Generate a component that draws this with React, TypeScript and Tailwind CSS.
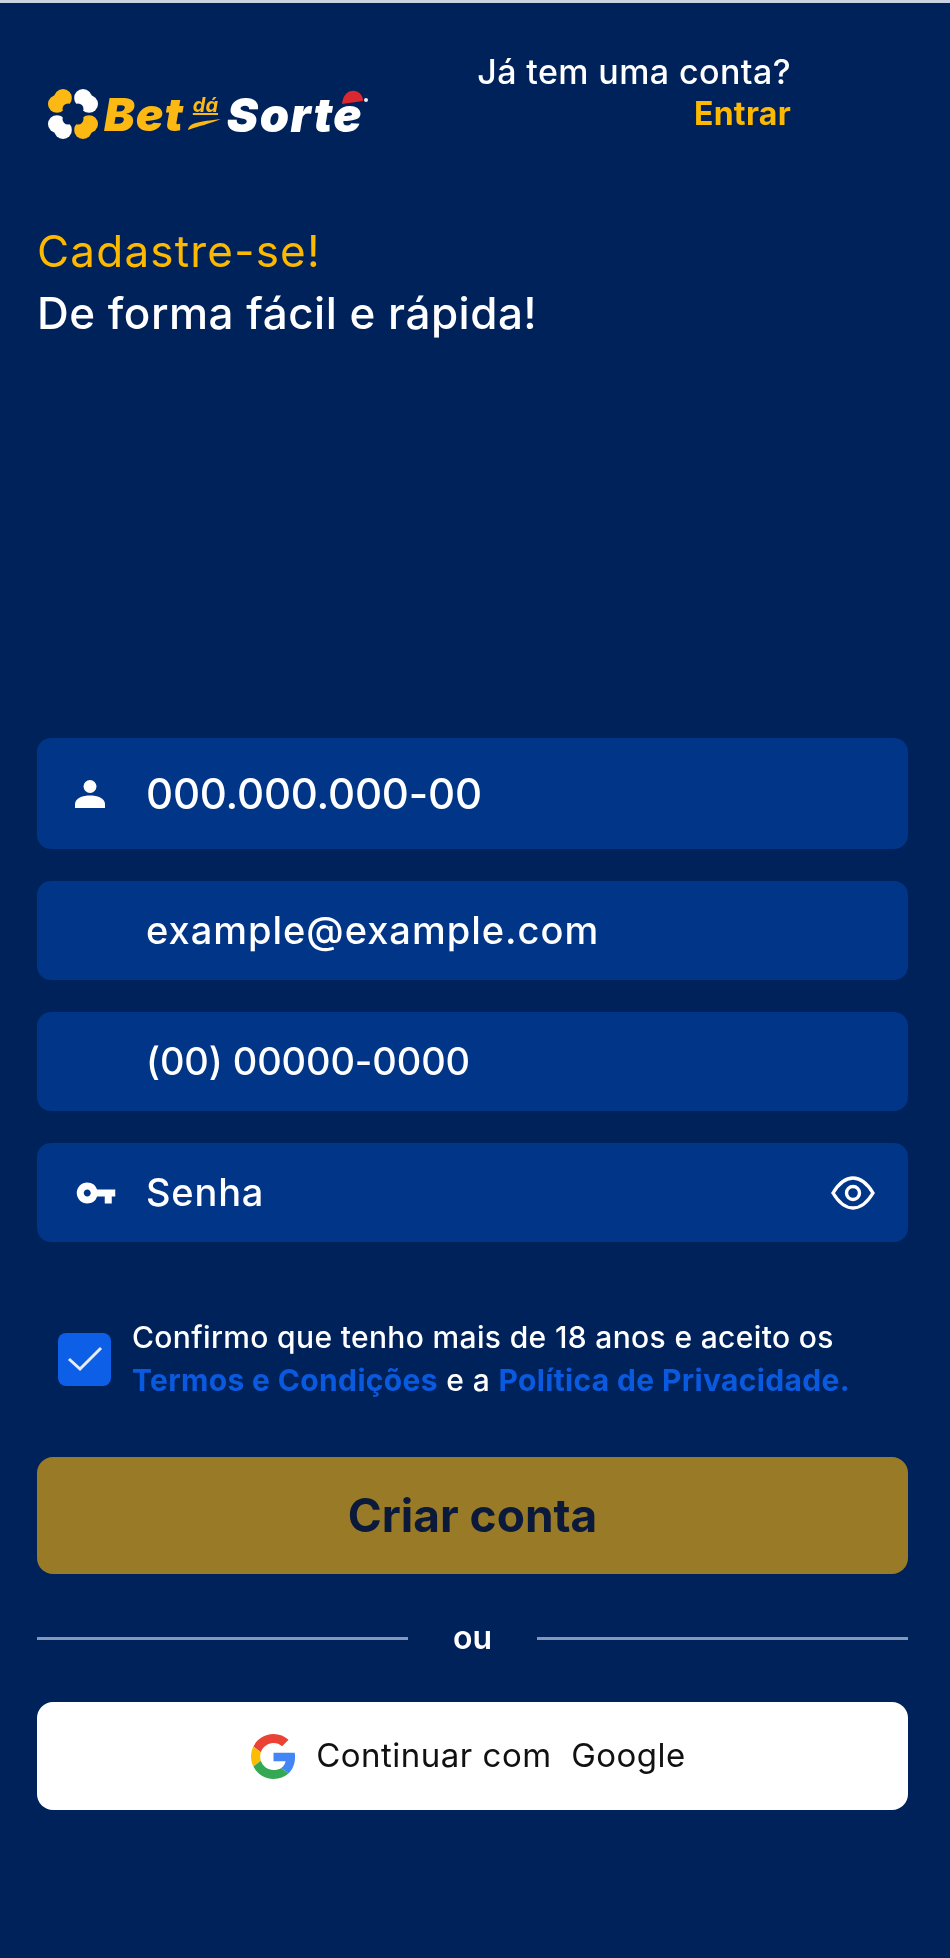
import { MdVpnKey } from "react-icons/md"

const font = { fontFamily: "Inter, 'Open Sans', sans-serif" }

function Logo() {
  return (
    <div className="flex items-center">
      <svg width="52" height="52" viewBox="0 0 52 52" className="shrink-0">
        <g fill="#fdb913">
          <circle cx="16" cy="10" r="9" />
          <circle cx="10" cy="16" r="9" />
          <circle cx="36" cy="42" r="9" />
          <circle cx="42" cy="36" r="9" />
        </g>
        <g fill="#fff">
          <circle cx="36" cy="10" r="9" />
          <circle cx="42" cy="16" r="9" />
          <circle cx="16" cy="42" r="9" />
          <circle cx="10" cy="36" r="9" />
        </g>
        <g fill="#00225a">
          <circle cx="21" cy="21" r="5.5" />
          <circle cx="31" cy="21" r="5.5" />
          <circle cx="21" cy="31" r="5.5" />
          <circle cx="31" cy="31" r="5.5" />
        </g>
        <path d="M26 0 V52 M0 26 H52" stroke="#00225a" strokeWidth="2.4" />
      </svg>
      <span className="ml-[5px] text-[46px] leading-none font-black italic text-[#fdb913] tracking-[1px]">Bet</span>
      <span className="relative ml-[6px] w-[36px] h-[40px]">
        <span className="absolute left-[3px] top-[1px] text-[20px] leading-none font-bold italic text-[#fdb913] underline">dá</span>
        <svg width="36" height="14" viewBox="0 0 36 14" className="absolute left-[-3px] top-[24px]">
          <path d="M1 12 C3 4 12 4 34 1 C22 6 12 8 1 12 Z" fill="#fdb913" />
        </svg>
      </span>
      <span className="relative ml-[1px] text-[47px] leading-none font-black italic text-white tracking-[1.5px]">
        Sorte
        <svg width="30" height="20" viewBox="0 0 30 20" className="absolute right-[-6px] top-[-2px]">
          <path d="M3 15 C4 5 10 1 16 2 C21 3 24 7 24 12 Z" fill="#d9282f" />
          <circle cx="27" cy="11" r="2" fill="#e8edf5" />
        </svg>
      </span>
    </div>
  )
}

function Field({ text, big, tracking, icon, right }: { text: string; big?: boolean; tracking?: string; icon?: React.ReactNode; right?: React.ReactNode }) {
  return (
    <div className={"flex items-center rounded-[14px] bg-[#003587] pl-[37px] pr-[33px] " + (big ? "h-[111px]" : "h-[99px]")}>
      <div className="w-[72px] shrink-0 flex items-center">{icon}</div>
      <span className={"text-white font-medium " + (big ? "text-[42px] " : "text-[38px] ") + tracking}>{text}</span>
      {right && <div className="ml-auto">{right}</div>}
    </div>
  )
}

export default function App() {
  return (
    <div style={font} className="h-[1958px] w-[950px] overflow-hidden bg-[#00225a] border-t-[3px] border-[#c9d3e2] text-white">
      <div className="blur-[0.6px]">
        <div className="flex items-start justify-between pl-[47px] pr-[159px] pt-[49px]">
          <div className="pt-[36px]">
            <Logo />
          </div>
          <div className="text-right">
            <p className="text-[34px] leading-[40px] font-medium tracking-[0.4px]">Já tem uma conta?</p>
            <p className="mt-[2px] text-[32px] leading-[40px] font-bold tracking-[0.3px] text-[#fcb900]">Entrar</p>
          </div>
        </div>

        <div className="pl-[37px] pr-[42px] pt-[86px]">
          <h1 className="text-[44px] leading-[50px] font-normal tracking-[1.2px] text-[#fcb900]">Cadastre-se!</h1>
          <h2 className="mt-[12px] text-[44px] leading-[50px] font-medium tracking-[0.5px]">De forma fácil e rápida!</h2>
        </div>

        <div className="pl-[37px] pr-[42px] pt-[400px]">
          <div className="flex flex-col gap-[32px]">
            <Field
              big
              text="000.000.000-00"
              tracking="tracking-[-0.2px]"
              icon={
                <svg width="32" height="30" viewBox="0 0 32 30" fill="#fff">
                  <circle cx="16" cy="7.5" r="6.5" />
                  <path d="M1 29 V25 C1 19 9 16.5 16 16.5 C23 16.5 31 19 31 25 V29 Z" />
                </svg>
              }
            />
            <Field text="example@example.com" tracking="tracking-[1px]" />
            <Field text="(00) 00000-0000" tracking="tracking-[-0.1px]" />
            <Field
              text="Senha"
              tracking="tracking-[0.8px]"
              icon={<MdVpnKey className="text-white text-[42px] ml-[1px]" />}
              right={
                <svg width="44" height="34" viewBox="0 0 44 34" fill="none" stroke="#fff" strokeWidth="3.4">
                  <path d="M2 17 C8 7 14 2 22 2 C30 2 36 7 42 17 C36 27 30 32 22 32 C14 32 8 27 2 17 Z" />
                  <circle cx="22" cy="17" r="6.5" />
                </svg>
              }
            />
          </div>

          <div className="mt-[74px] flex items-center pl-[21px]">
            <div className="flex h-[53px] w-[53px] shrink-0 items-center justify-center rounded-[8px] bg-[#0d5fe8]">
              <svg width="38" height="28" viewBox="0 0 38 28" fill="none" stroke="#e6eefb" strokeWidth="3">
                <path d="M3 14 L14 24 L35 3" />
              </svg>
            </div>
            <div className="ml-[21px] text-[30px] leading-[43px] font-medium whitespace-nowrap tracking-[0.35px]">
              <p>Confirmo que tenho mais de 18 anos e aceito os</p>
              <p>
                <span className="font-bold text-[#0a5ae0]">Termos e Condições</span> e a{" "}
                <span className="font-bold text-[#0a5ae0]">Política de Privacidade.</span>
              </p>
            </div>
          </div>

          <button className="mt-[55px] flex h-[117px] w-full items-center justify-center rounded-[16px] bg-[#997a26] text-[46px] font-bold text-[#0b1a3a]">
            Criar conta
          </button>

          <div className="mt-[41px] flex items-center justify-between h-[46px]">
            <div className="h-[3px] w-[371px] bg-[#8597b8]" />
            <span className="text-[32px] font-semibold">ou</span>
            <div className="h-[3px] w-[371px] bg-[#8597b8]" />
          </div>

          <button className="mt-[41px] flex h-[108px] w-full items-center justify-center rounded-[16px] bg-white pr-[8px] text-[#111]">
            <svg width="45" height="45" viewBox="0 0 48 48" className="mr-[20px]">
              <path fill="#EA4335" d="M24 9.5c3.54 0 6.71 1.22 9.21 3.6l6.85-6.85C35.9 2.38 30.47 0 24 0 14.62 0 6.51 5.38 2.56 13.22l7.98 6.19C12.43 13.72 17.74 9.5 24 9.5z" />
              <path fill="#4285F4" d="M46.98 24.55c0-1.57-.15-3.09-.38-4.55H24v9.02h12.94c-.58 2.96-2.26 5.48-4.78 7.18l7.73 6c4.51-4.18 7.09-10.36 7.09-17.65z" />
              <path fill="#FBBC05" d="M10.53 28.59c-.48-1.45-.76-2.99-.76-4.59s.27-3.14.76-4.59l-7.98-6.19C.92 16.46 0 20.12 0 24c0 3.88.92 7.54 2.56 10.78l7.97-6.19z" />
              <path fill="#34A853" d="M24 48c6.48 0 11.93-2.13 15.89-5.81l-7.73-6c-2.15 1.45-4.92 2.3-8.16 2.3-6.26 0-11.57-4.22-13.47-9.91l-7.98 6.19C6.51 42.62 14.62 48 24 48z" />
            </svg>
            <span className="text-[33px] font-normal tracking-[0.5px]">Continuar com&nbsp; Google</span>
          </button>
        </div>
      </div>
    </div>
  )
}
